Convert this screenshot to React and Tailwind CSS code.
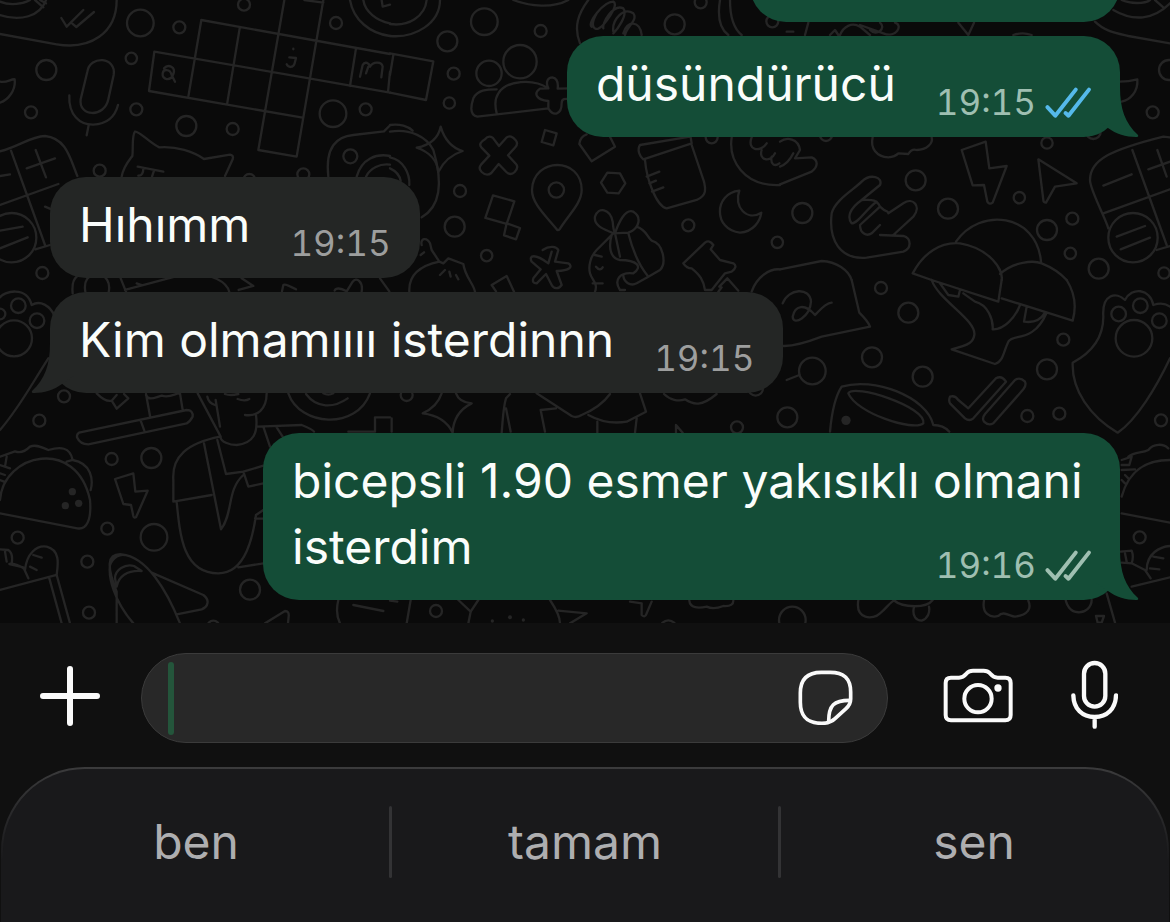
import React from "react";

/* Wallpaper doodles. Each tile is drawn on a grid three times finer than the page. */
const TILES = [
  {
    x: 0,
    y: 0,
    circles: [
      [421, 69, 40], [538, 82, 18], [394, 175, 17], [139, 210, 30], [93, 337, 18], [409, 328, 18],
      [559, 378, 30], [698, 387, 18], [732, 14, 18], [1008, 69, 18], [999, 341, 40], [1097, 328, 18],
      [1051, 469, 21], [299, 512, 18], [910, 523, 18], [748, 540, 18], [35, 713, 74], [127, 819, 18],
    ],
    paths: [
      "M0 102L170 133C270 150 350 100 350 0", "M0 45C60 65 120 50 138 0M0 5C30 18 70 12 90 0M105 0l25 22M120 0l18 10",
      "M184 54L200 80L250 30M217 71l12 10L282 36", "M0 245C20 250 35 235 44 238C48 270 25 300 0 308",
      "M262 215C270 165 350 170 341 225L325 298C313 355 235 350 242 298ZM208 286C205 345 240 375 280 374C320 372 345 350 354 315M266 376L260 406",
      "M604 60L1170 162M463 155L910 232L1170 278M447 273L908 353M463 155L447 273M604 60L565 290M719 85L681 314M853 0L775 450L890 470L970 0M913 0L970 8M1068 145L1050 258M1170 215L1164 276",
      "M492 205C505 190 528 202 520 222C512 245 485 240 488 220C490 207 510 205 515 225L525 245",
      "M868 172L888 174L884 190C880 205 865 203 860 193M880 146v2",
      "M1080 230L1088 195C1095 182 1108 190 1110 200C1118 185 1145 183 1148 200L1144 232M1105 200L1098 220",
      "M1050 0C1060 60 1110 100 1170 108M1090 0C1095 35 1130 62 1170 70M1145 0L1148 20L1170 14",
      "M0 454C60 438 90 410 135 408C200 415 210 475 232 528M0 615L175 552M33 452L135 735M0 528l30-5M80 505L165 475M107 450L138 532M0 692L68 680M0 745L83 712M106 748L150 735M135 620l20 8",
      "M365 530C370 500 388 480 397 468C400 450 395 405 405 395C415 390 450 430 478 442C530 438 580 455 612 477L690 464Q702 466 698 478L675 528M413 500L490 515M430 504C430 520 425 528 415 527M462 512L456 530",
      "M985 530C975 440 1010 410 1060 405L1152 394L1168 378M1070 530C1085 475 1130 460 1170 468M1098 530C1110 505 1140 490 1170 494",
      "M218 880C215 850 222 835 232 828M256 875C250 840 265 825 292 822C320 825 332 850 326 876M362 835L378 875M375 870L570 818C640 825 680 845 688 876M410 850l15 5M725 835L760 858L716 870M846 874L850 855Q855 850 888 868M1004 872Q1010 858 1040 874M1040 874L1058 845C1070 830 1090 845 1085 875M1140 835L1168 874",
    ],
  },
  {
    x: 390,
    y: 0,
    circles: [
      [283, 65, 40], [172, 124, 30], [452, 93, 18], [191, 221, 18], [178, 309, 17], [390, 185, 50],
      [297, 220, 38], [854, 73, 30], [932, 7, 18], [1147, 64, 18], [210, 573, 18], [194, 680, 30],
      [290, 767, 17], [499, 570, 23], [895, 676, 18], [965, 412, 18], [1162, 727, 17],
    ],
    paths: [
      "M0 108C75 115 150 70 150 0M0 72C55 80 105 50 110 0M370 0C420 20 490 25 535 0",
      "M0 160L130 184L108 300L0 278M10 165L0 225",
      "M262 350C235 345 245 310 250 295C262 270 290 268 320 268M320 340C315 320 315 295 325 280C350 240 430 235 475 265M262 350L475 325C490 350 515 345 515 310C515 295 525 296 540 297M475 265C465 245 475 232 487 232C502 235 505 250 503 266L540 265M475 265L450 266C430 280 438 300 475 303V325",
      "M605 80C590 70 640 5 670 5C690 15 640 80 625 86C610 90 600 75 620 40M640 85C635 70 670 10 700 25C715 45 680 90 670 100M670 95C665 60 700 20 730 40C745 60 710 80 705 105M700 100C710 60 750 60 755 105M570 130C550 80 565 40 595 0",
      "M990 0C980 60 995 90 1015 105M1020 0C1020 50 1030 85 1055 105",
      "M152 380C165 425 190 445 218 453C180 465 160 485 145 516C142 480 115 455 80 443C120 435 145 415 152 380Z",
      "M0 395C60 385 110 410 130 450C160 550 150 620 95 652M0 375C30 370 55 380 68 392M0 472C40 480 60 520 58 555M0 505C22 515 30 530 32 543",
      "M285 418Q295 405 308 413L327 438L349 413Q363 402 378 422Q385 432 376 442L354 466L378 492Q387 502 374 516Q362 528 349 516L326 492L304 519Q290 530 275 516Q264 505 273 494L298 467L274 442Q264 430 285 418Z",
      "M465 390L500 400L490 436L455 426ZM568 432L605 484L675 440L660 410M568 432Q570 410 590 403",
      "M502 690C470 650 425 610 426 570C430 470 575 470 575 570C575 610 535 645 510 686Q505 692 502 690Z",
      "M633 548L652 518L690 520L706 550L686 580L652 578Z",
      "M309 586L373 604L350 672L286 654ZM350 670L390 684L378 718L342 706Z",
      "M750 435L900 410M750 435C740 450 750 470 760 478L905 430L902 412M765 480C770 540 800 620 830 625L920 600C955 585 945 560 942 545L905 435M770 530L808 515M778 550L798 542M786 575L820 562",
      "M1048 572C970 580 970 690 1050 698C1090 695 1110 665 1114 638C1070 665 1030 620 1048 572Z",
      "M1025 412C1015 480 1060 560 1170 555M1085 412C1070 450 1110 460 1130 430M1115 450C1105 480 1140 490 1155 460M1145 470C1140 495 1155 500 1168 490",
      "M670 700C650 690 610 680 615 650C625 620 660 625 668 665C670 690 672 695 675 700C685 670 705 625 730 635C755 650 750 685 715 698L670 700L620 750C600 770 595 800 600 820C605 840 625 850 615 875M665 705C655 740 660 775 690 780C740 780 760 800 730 820C690 815 670 840 690 870L705 870M675 700L690 770M715 700C730 760 750 800 775 830L740 850C720 860 700 845 700 825M740 680C770 690 770 710 785 722C820 730 830 790 810 810L775 830M615 765l20 5M618 800Q630 815 638 802M608 850h30",
      "M880 790L945 728Q958 718 970 735L962 748L990 780L1030 790Q1045 800 1025 815L1005 820L965 870L945 870C940 840 930 825 905 805Q890 805 880 790M988 860L1012 835L1045 872M985 875L995 862",
      "M458 750C480 735 500 740 505 750L495 785L535 790C550 800 540 812 500 813L515 855C505 870 490 865 485 855L468 822L440 850Q425 850 430 835L452 808L425 785C415 765 435 760 475 790L485 755",
      "M95 735C90 715 110 710 120 730L125 750L148 785L160 790L175 775L220 792C225 830 250 850 255 875M92 765l10-8M58 875C55 820 100 795 148 785M178 815L182 830M198 825L205 838M150 825L165 810",
      "M305 855L350 828L372 875M305 855L318 874M1085 875C1100 830 1140 805 1170 808",
    ],
  },
  {
    x: 780,
    y: 0,
    circles: [
      [1167, 210, 30], [1118, 337, 18], [801, 429, 17], [407, 541, 30], [504, 626, 30], [718, 593, 17],
      [877, 656, 18], [801, 690, 30], [871, 760, 17], [956, 806, 30], [67, 639, 30],
      [1059, 713, 74], [1152, 819, 17], [138, 405, 18], [940, 395, 22],
    ],
    paths: [
      "M945 65C975 95 1010 100 1045 108L1170 130M1000 30C1060 65 1120 60 1170 10M1025 0C1050 12 1095 12 1110 0M1125 0l25 22",
      "M20 95h20M75 105L85 68M150 105L165 90L175 105M180 105C190 80 215 65 240 80L270 105M240 75L310 100C350 115 370 75 345 68M300 68C320 85 290 110 270 90M535 68L565 105L582 68M700 105Q728 95 755 105",
      "M1020 245Q1045 245 1072 238C1075 275 1050 300 1025 305",
      "M0 425C20 410 55 415 60 450L45 475L95 472C115 480 115 500 95 515L0 553M40 460C30 480 15 495 0 500",
      "M278 412C270 445 290 470 325 472Q345 470 355 460L385 462Q395 445 410 450C440 450 460 430 455 412",
      "M545 450L617 425L628 505L680 498L638 608Q628 615 622 605L612 555L578 556Z",
      "M775 478L890 550L825 560L798 608Q790 608 790 600Z",
      "M155 640C165 600 220 570 245 545C270 520 310 530 300 555L245 600C210 625 200 650 215 670C235 670 260 625 290 605M245 600C270 600 290 595 300 620L240 675C240 700 260 710 275 700L300 675M300 620C320 640 325 630 325 640L370 610C400 590 425 620 400 650L340 705M300 705L370 708C395 715 395 745 370 755L260 773C180 780 145 720 155 640",
      "M398 820C430 760 480 725 540 730C630 745 670 810 665 840M398 820L455 840M528 725C600 620 770 640 783 785M660 822C700 785 760 780 785 790C810 800 840 818 860 840",
      "M0 808L125 783C170 785 205 810 215 840",
      "M985 685C975 650 930 570 930 540C930 480 990 450 1150 410L1170 412M1057 450L1160 735M970 640L1170 568M970 557L1055 523M1105 508L1170 485M1132 450L1160 530M1010 710L1095 678M1022 748L1110 713M1130 750L1170 738",
    ],
  },
  {
    x: 0,
    y: 280,
    circles: [
      [42, 175, 54], [55, 77, 22], [111, 122, 22], [0, 102, 16], [192, 349, 18], [118, 422, 18],
      [335, 537, 18], [454, 534, 30], [322, 746, 18], [462, 772, 40], [53, 773, 18], [262, 845, 18],
      [750, 929, 30], [267, 998, 18], [640, 1040, 18],
    ],
    dots: [[217, 635, 11], [236, 670, 11], [196, 677, 11]],
    paths: [
      "M0 52C10 35 80 15 95 75C120 60 150 75 165 110M0 450C60 380 90 320 145 235",
      "M290 340C310 360 325 365 335 362L350 386L385 355L372 342M335 362L350 345M438 342L450 408M540 340L548 390M438 345C445 365 470 350 485 347C510 355 525 340 538 340M237 458L560 390Q580 390 578 410Q570 425 560 430L265 493Q240 493 231 472Q230 462 237 458M422 422L433 452",
      "M0 530L45 514C60 520 75 515 90 500C110 490 130 505 145 510C180 500 210 500 218 540C275 550 280 600 272 630M0 660C10 520 230 470 270 660C275 720 260 750 232 745L0 700M0 555L30 565M20 530L15 560M0 580L15 585M0 600L12 605M200 545L218 540",
      "M345 597L400 580L406 635L443 632L408 712Q402 715 400 708L393 675L370 672Z",
      "M593 340L662 470C660 485 690 495 710 495C760 490 775 460 768 405M647 360L660 440M622 350C625 365 635 372 645 375M800 340C800 390 770 410 735 405M713 357Q735 365 748 357M675 342Q690 348 715 342M772 440L905 435C930 445 940 450 942 455M660 470C560 490 515 530 520 600V665L635 645M612 490L663 748C700 700 680 630 730 585M652 480L678 582L730 575L790 557M530 665C540 770 550 880 655 880C740 880 760 760 768 705L790 690M730 575L745 620L790 610M790 440L810 500M830 442L848 470M765 715L790 716M715 862L790 850",
      "M865 340C900 440 1070 450 1110 340M918 342C950 385 1000 385 1043 355M970 340Q985 348 1000 340M1045 455H1125V412H1170",
      "M0 808L25 810Q40 820 35 850L28 852L70 862L85 895M15 815L20 845M35 850C55 855 70 862 75 870C80 820 110 795 140 800C180 810 175 850 170 885M100 825L125 833M90 860L110 870M0 930L170 885L210 1030M148 895L185 1030",
      "M350 1030V935C320 860 320 820 365 823C440 830 500 930 540 1030M400 1030C340 960 325 890 330 855C340 830 360 822 375 825M350 920C355 890 380 870 425 873L402 858C375 850 345 870 345 895ZM455 878L610 945C630 960 625 980 605 988L530 1003",
      "M795 1030L855 993Q868 993 866 1010L864 1030M1015 960Q1005 1000 1020 1030M1060 975L1150 993",
    ],
  },
  {
    x: 390,
    y: 280,
    circles: [[50, 345, 18], [1041, 442, 18], [138, 993, 18], [1097, 325, 22], [835, 1045, 24]],
    dots: [[307, 1023, 5], [360, 1012, 6], [400, 1020, 5]],
    paths: [
      "M155 340C145 370 120 390 98 400C140 405 170 420 188 458C190 410 215 385 245 370C220 368 205 360 198 340M5 415V455",
      "M335 458C340 400 340 380 348 355L360 342M348 385L362 455M440 340L545 408Q560 415 575 405C610 390 640 370 660 342M452 390L498 385M452 390L465 455M595 405C640 430 680 430 710 425L768 395L750 340M622 425V458M740 415L735 458M822 342C840 360 865 365 885 358C910 375 935 380 980 342M858 458V435L878 458",
      "M0 962L22 965M62 960L50 1030M205 960L242 995L235 1030M242 995L265 960M480 960C500 990 510 1010 510 1030M505 992L590 1000L540 1030M720 965L755 970V1005Q765 1015 770 1000L785 965M898 962C900 985 925 985 950 980C970 990 990 982 1000 978C1025 980 1030 970 1030 962",
    ],
  },
  {
    x: 780,
    y: 280,
    circles: [
      [303, 24, 18], [385, 98, 30], [276, 232, 30], [97, 273, 40], [428, 290, 30], [22, 412, 30],
      [850, 179, 18], [801, 268, 30], [742, 408, 18], [838, 401, 18], [1143, 421, 18], [1016, 102, 22],
      [1081, 77, 22], [1138, 122, 22], [1062, 175, 55], [1079, 772, 18], [37, 1020, 40],
    ],
    dots: [[198, 421, 14]],
    paths: [
      "M8 70C25 25 90 20 93 65C90 110 40 140 38 110C45 75 75 70 105 105C120 90 135 70 155 68M215 0L238 98Q265 125 270 140L125 170C60 195 20 200 0 197M20 300L58 285",
      "M455 0L655 65L665 0M665 55L878 122C890 80 885 40 860 0M455 0C475 60 590 120 583 165C580 185 570 195 515 208L645 252C670 245 670 215 685 185C700 160 760 190 800 98M550 40L585 65C625 75 640 120 638 148C670 150 705 115 720 75M740 80L732 125C765 130 785 115 795 98M480 10L505 45L535 50L540 30",
      "M150 455C155 400 165 350 185 320C280 290 440 350 460 435Q490 435 508 455M205 340C220 310 440 380 430 430C400 455 230 400 205 340Z",
      "M510 350Q525 345 535 360L565 385L648 295Q665 285 678 305L580 415Q568 425 555 415L510 370Q505 360 510 350ZM705 300Q720 290 735 305Q740 315 730 328L640 430Q625 438 612 425Q605 415 615 402Z",
      "M970 110C965 40 1010 35 1035 60C1055 20 1110 25 1120 75Q1150 65 1170 80M970 110C970 180 930 220 878 248C875 330 930 410 1013 458C1070 420 1130 320 1170 235",
      "M1025 540L1055 530L1048 555H1025M1045 530C1065 515 1085 520 1105 510C1120 490 1150 490 1165 505M1025 650C1050 560 1110 540 1170 540M1025 700L1170 728M1025 570L1065 568M1025 600L1035 610M1035 585l10 10",
      "M1022 815L1055 812Q1062 830 1055 850L1025 848M1035 820L1040 845M1055 850L1095 870L1112 895M1100 870C1100 820 1140 800 1170 798M1120 830L1150 835M1110 865L1138 868M1055 920L1170 892M980 940L1005 1028M855 940C855 1020 935 1005 935 960M948 1008H972L965 1028H953Z",
      "M235 960C225 1020 280 1020 300 1000C320 985 330 965 345 960M340 960C370 985 440 985 458 960M402 980C395 1010 410 1022 425 1022C445 1015 450 995 447 980M612 962C605 1000 630 1015 655 1008C670 990 690 1010 705 1010C745 1005 755 985 745 962",
    ],
  },
];

function Wallpaper() {
  return (
    <svg
      className="absolute inset-0 h-full w-full"
      viewBox="0 0 1170 623"
      preserveAspectRatio="xMidYMax slice"
      aria-hidden="true"
    >
      {TILES.map((t) => (
        <g
          key={`${t.x}-${t.y}`}
          transform={`translate(${t.x} ${t.y}) scale(0.33333)`}
          fill="none"
          stroke="#252525"
          strokeWidth="7"
          strokeLinecap="round"
          strokeLinejoin="round"
        >
          {t.circles.map(([cx, cy, r]) => (
            <circle key={`${cx}-${cy}`} cx={cx} cy={cy} r={r} />
          ))}
          {(t.dots || []).map(([cx, cy, r]) => (
            <circle key={`d${cx}-${cy}`} cx={cx} cy={cy} r={r} fill="#252525" stroke="none" />
          ))}
          {t.paths.map((d) => (
            <path key={d} d={d} />
          ))}
        </g>
      ))}
    </svg>
  );
}

function Ticks({ read }) {
  return (
    <svg
      className={read ? "h-[33px] w-[48px] text-[#55b9ea]" : "h-[33px] w-[48px] text-[#9fbfb1]"}
      viewBox="797 250 143 100"
      fill="none"
      stroke="currentColor"
      strokeWidth="12"
      strokeLinecap="round"
      strokeLinejoin="round"
      role="img"
      aria-label={read ? "Okundu" : "İletildi"}
    >
      <path d="M806 314L830 340L892 261M861 332L870 340L932 261" />
    </svg>
  );
}

function Tail({ mine }) {
  return (
    <svg
      className={
        mine
          ? "absolute -right-[19px] bottom-0 h-[50px] w-[44px] text-[#144d37]"
          : "absolute bottom-0 -left-[19px] h-[50px] w-[44px] -scale-x-100 text-[#242625]"
      }
      viewBox="-25 -50 44 50"
      fill="currentColor"
      aria-hidden="true"
    >
      <path d="M0 -50C0 -28 5 -14 18 -2Q19 0 16 0C6 0 -4 -3 -12 -9L-25 -18V-50Z" />
    </svg>
  );
}

function Bubble({ mine, tail, time, status, children }) {
  return (
    <div
      className={
        mine
          ? "relative max-w-[857px] self-end rounded-[36px] bg-[#144d37] pt-[15px] pr-7 pb-[15px] pl-[29px]"
          : "relative max-w-[857px] self-start rounded-[36px] bg-[#242625] px-[29px] pt-[15px] pb-[15px]"
      }
    >
      {tail && <Tail mine={mine} />}
      <div className="flow-root text-[48px] leading-[66px] text-[#fafdfb]">
        {children}
        <span
          className={
            mine
              ? "float-right mt-[31px] ml-10 flex items-center gap-2 text-[35px] leading-10 text-[#9fbfb1] tabular-nums"
              : "float-right mt-[31px] ml-10 flex items-center text-[35px] leading-10 text-[#9d9e9e] tabular-nums"
          }
        >
          <time>{time}</time>
          {status && <Ticks read={status === "read"} />}
        </span>
      </div>
    </div>
  );
}

function Composer() {
  return (
    <form className="flex items-center bg-[#101010] pt-[30px] pr-[52px] pb-6 pl-10" onSubmit={(e) => e.preventDefault()}>
      <button type="button" aria-label="Ekle" className="mr-[41px] -mt-1">
        <svg className="size-[60px]" viewBox="0 0 60 60" stroke="#fafafa" strokeWidth="6" strokeLinecap="round">
          <path d="M30 3V57M3 30H57" />
        </svg>
      </button>
      <div className="mr-[55px] flex h-[90px] min-w-0 flex-1 items-center rounded-full border border-[#3b3b3b] bg-[#282828] pr-[34px] pl-[26px]">
        <span className="h-[73px] w-[6px] rounded-full bg-[#24553b]" aria-hidden="true" />
        <input
          type="text"
          aria-label="Mesaj"
          className="h-[73px] min-w-0 flex-1 bg-transparent px-2 text-[48px] text-white caret-transparent outline-none"
        />
        <button type="button" aria-label="Çıkartmalar" className="-mt-[2px]">
          <svg className="size-[55px]" viewBox="54 149 165 165" fill="none" stroke="#fafafa" strokeWidth="11" strokeLinecap="round" strokeLinejoin="round">
            <path d="M212 236V215C212 172 190 156 150 156H124C80 156 61 178 61 218V246C61 290 82 309 126 309C144 309 153 306 165 295L198 265C209 255 212 249 212 236Z" />
            <path d="M209 240C162 240 146 254 146 303" />
          </svg>
        </button>
      </div>
      <button type="button" aria-label="Kamera" className="mr-[58px] -mt-[6px]">
        <svg className="h-[55px] w-[70px]" viewBox="490 145 210 165" fill="none" stroke="#fafafa" strokeWidth="12" strokeLinejoin="round">
          <path d="M514 174H538C551 174 556 167 562 160C567 154 570 153 580 153H612C622 153 625 154 630 160C636 167 641 174 654 174H677Q693 174 693 190V286Q693 302 677 302H514Q498 302 498 286V190Q498 174 514 174Z" />
          <circle cx="595" cy="237" r="41" />
          <circle cx="655" cy="205" r="11" fill="#fafafa" stroke="none" />
        </svg>
      </button>
      <button type="button" aria-label="Sesli mesaj" className="-mt-[6px]">
        <svg className="h-[70px] w-[47px]" viewBox="874 121 141 210" fill="none" stroke="#fafafa" strokeWidth="13" strokeLinecap="round">
          <rect x="913" y="130" width="64" height="131" rx="32" />
          <path d="M881 227C882 268 908 292 945 292S1008 268 1009 227M945 292V321" />
        </svg>
      </button>
    </form>
  );
}

function Suggestions({ words }) {
  return (
    <div className="bg-[#101010]">
      <div className="mx-[1px] rounded-t-[84px] bg-linear-to-b from-[#3b3b3c] to-[#19191b] to-60% px-[2px] pt-[2px]">
        <div className="flex h-[153px] items-center rounded-t-[82px] bg-[#19191b] pb-2">
          {words.map((w, i) => (
            <React.Fragment key={w}>
              {i > 0 && <span className="h-[72px] w-[3px] rounded-full bg-[#333335]" />}
              <button type="button" className="flex-1 text-center text-[48px] leading-[66px] text-[#aeaeb0]">
                {w}
              </button>
            </React.Fragment>
          ))}
        </div>
      </div>
    </div>
  );
}

export default function App() {
  return (
    <div className="flex h-screen flex-col bg-[#101010] font-['Inter',sans-serif]">
      <main className="relative min-h-0 flex-1 overflow-hidden bg-[#0a0a0a]">
        <Wallpaper />
        <div className="relative flex h-full flex-col justify-end gap-10 px-[50px] pb-[23px]">
          <section className="flex flex-col gap-[14px]">
            <div className="h-[101px] w-[370px] self-end rounded-[36px] bg-[#144d37]" />
            <Bubble mine tail time="19:15" status="read">düsündürücü</Bubble>
          </section>
          <section className="flex flex-col gap-[14px]">
            <Bubble time="19:15">Hıhımm</Bubble>
            <Bubble tail time="19:15">Kim olmamıııı isterdinnn</Bubble>
          </section>
          <section className="flex flex-col">
            <Bubble mine tail time="19:16" status="sent">bicepsli 1.90 esmer yakısıklı olmani isterdim</Bubble>
          </section>
        </div>
      </main>
      <Composer />
      <Suggestions words={["ben", "tamam", "sen"]} />
    </div>
  );
}
